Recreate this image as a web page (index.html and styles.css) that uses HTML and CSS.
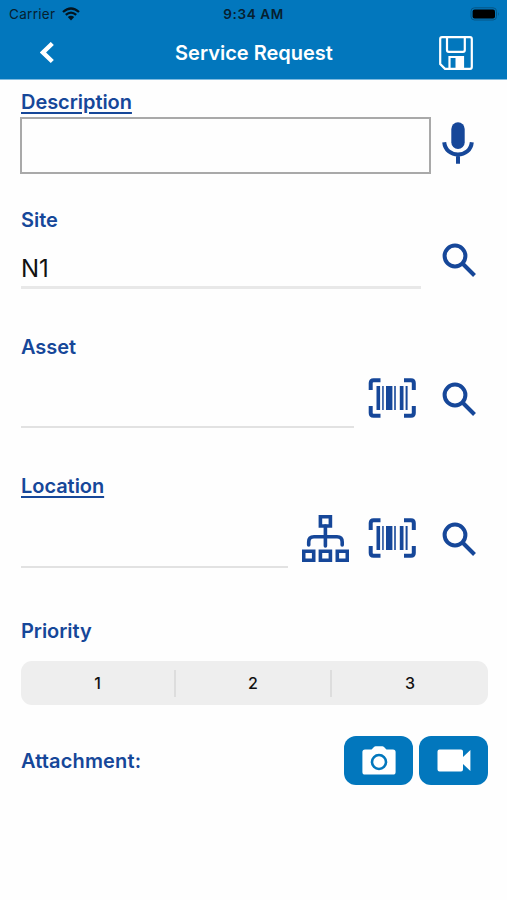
FILE: index.html
```html
<!DOCTYPE html>
<html lang="en">
<head>
    <meta charset="UTF-8" />
    <meta name="viewport" content="width=device-width, initial-scale=1" />
    <title>Service Request</title>
    <link rel="stylesheet" href="styles.css">
</head>
<body>
    <!-- Shared icons -->
    <svg class="icon-defs" width="0" height="0">
        <symbol id="icon-search" viewBox="0 0 34 34">
            <circle cx="13" cy="13" r="10.4" />
            <path d="M20.5 20.5L32.5 32.5" />
        </symbol>
        <symbol id="icon-barcode" viewBox="0 0 48 40">
            <path d="M2.7 12V5Q2.7 2.2 5.5 2.2H12.5M36 2.2H43Q45.8 2.2 45.8 5V12M2.7 28V35Q2.7 37.8 5.5 37.8H12.5M36 37.8H43Q45.8 37.8 45.8 35V28" />
            <path class="solid" d="M8.5 8h3.6v24H8.5zM14.2 8h1.5v24h-1.5zM18 8h6.4v24H18zM26.2 8h1.6v24h-1.6zM31.8 8h3.7v24h-3.7zM37.6 8h2v24h-2z" />
        </symbol>
    </svg>

    <header class="header">
        <div class="status-bar">
            <div class="carrier">
                <span>Carrier</span>
                <svg class="wifi" width="18" height="14" viewBox="0 0 18 14">
                    <path d="M1 5Q9 -2 17 5M3.8 7.9Q9 3.3 14.2 7.9" />
                    <path class="dot" d="M5.8 10Q9 7.4 12.2 10L9 13.4z" />
                </svg>
            </div>
            <div class="time">9:34 AM</div>
            <svg class="battery" width="30" height="14" viewBox="0 0 30 14">
                <rect class="shell" x="1" y=".8" width="25.5" height="12.2" rx="3.5" />
                <rect x="2.6" y="2.4" width="22.4" height="9" rx="2" />
                <path class="tip" d="M28 5q1.6 2 0 4z" />
            </svg>
        </div>
        <div class="nav">
            <button class="nav-button" aria-label="Back">
                <svg width="14" height="22" viewBox="0 0 14 22"><path class="back" d="M12.3 1.5L3 10.5L12.3 19.5" /></svg>
            </button>
            <h1>Service Request</h1>
            <button class="nav-button" aria-label="Save">
                <svg class="save" width="34" height="34" viewBox="0 0 34 34">
                    <path d="M3 1.2H31Q32.8 1.2 32.8 3V31Q32.8 32.8 31 32.8H6L1.2 28V3Q1.2 1.2 3 1.2z" />
                    <path d="M8 1.5V14Q8 15.8 9.8 15.8H24Q25.8 15.8 25.8 14V1.5M10.5 32V21H24V32" />
                    <path class="fill" d="M16.5 21H24V32H16.5z" />
                </svg>
            </button>
        </div>
    </header>

    <main class="form">
        <section class="field description">
            <div class="label required">Description</div>
            <div class="row">
                <div class="text-box"></div>
                <svg class="icon mic" width="32" height="42" viewBox="0 0 32 42">
                    <rect class="solid" x="9.3" y=".3" width="13.4" height="26.7" rx="6.7" />
                    <path d="M2.2 20.2C3 28 8.8 32.5 16 32.5S29 28 29.8 20.2M16 33V41.8" />
                </svg>
            </div>
        </section>

        <section class="field site">
            <div class="label">Site</div>
            <div class="row">
                <div class="line-input">N1</div>
                <svg class="icon search" width="34" height="34"><use href="#icon-search" /></svg>
            </div>
        </section>

        <section class="field asset">
            <div class="label">Asset</div>
            <div class="row">
                <div class="line-input"></div>
                <svg class="icon barcode" width="48" height="40"><use href="#icon-barcode" /></svg>
                <svg class="icon search" width="34" height="34"><use href="#icon-search" /></svg>
            </div>
        </section>

        <section class="field location">
            <div class="label required">Location</div>
            <div class="row">
                <div class="line-input"></div>
                <svg class="icon tree" width="47" height="47" viewBox="0 0 47 47">
                    <path d="M18.4 1.7h10v9.3h-10zM1.7 36.2h10v9.2h-10zM18.4 36.2h10v9.2h-10zM35.3 36.2h10v9.2h-10z" />
                    <path class="branch" d="M23.4 11V31M6.7 30V27Q6.7 21.8 12 21.8H35Q40.2 21.8 40.2 27V30" />
                </svg>
                <svg class="icon barcode" width="48" height="40"><use href="#icon-barcode" /></svg>
                <svg class="icon search" width="34" height="34"><use href="#icon-search" /></svg>
            </div>
        </section>

        <section class="field priority">
            <div class="label">Priority</div>
            <div class="segments">
                <button>1</button>
                <span class="divider"></span>
                <button>2</button>
                <span class="divider"></span>
                <button>3</button>
            </div>
        </section>

        <section class="attachment">
            <div class="label">Attachment:</div>
            <div class="buttons">
                <button class="attach-button" aria-label="Photo">
                    <svg width="34" height="29" viewBox="0 0 34 29">
                        <path d="M3 3.4H9.5L12 .9Q12.7 .2 13.6 .2H20.4Q21.3 .2 22 .9L24.5 3.4H31Q33.6 3.4 33.6 6V26Q33.6 28.6 31 28.6H3Q.4 28.6 .4 26V6Q.4 3.4 3 3.4z" />
                        <circle class="lens" cx="17" cy="16" r="7" />
                    </svg>
                </button>
                <button class="attach-button" aria-label="Video">
                    <svg width="34" height="23" viewBox="0 0 34 23">
                        <path d="M2.5 .4H24Q26 .4 26 2.4V8L33.4 1V22L26 15V20.6Q26 22.6 24 22.6H2.5Q.5 22.6 .5 20.6V2.4Q.5 .4 2.5 .4z" />
                    </svg>
                </button>
            </div>
        </section>
    </main>
</body>
</html>
```

FILE: styles.css
```css
* {
    box-sizing: border-box;
}
body {
    margin: 0;
    background-color: #fefefe;
    color: #111;
    font-family: Inter, "Liberation Sans", sans-serif;
}
button {
    border: none;
    padding: 0;
    background: none;
    font-family: inherit;
}
svg {
    display: block;
    flex-shrink: 0;
}
.icon-defs {
    height: 0;
}

/* Header */
.header {
    height: 80px;
    background-color: #0277bd;
    border-bottom: 1px solid #7fbbe0;
}
.status-bar {
    display: grid;
    grid-template-columns: 1fr auto 1fr;
    align-items: center;
    height: 27px;
    padding: 0 7px 0 9px;
    font-size: 13.5px;
    color: #06202f;
}
.carrier {
    display: flex;
    align-items: center;
    gap: 7px;
    letter-spacing: 0.3px;
}
.wifi {
    fill: none;
    stroke: #04141e;
    stroke-width: 2.3;
}
.wifi .dot {
    fill: #04141e;
    stroke: none;
}
.time {
    margin-right: 2px;
    font-weight: 600;
    letter-spacing: 0.6px;
}
.battery {
    justify-self: end;
}
.battery .shell {
    fill: none;
    stroke: #075685;
}
.battery .tip {
    fill: #075685;
}
.nav {
    display: grid;
    grid-template-columns: 66px 1fr 66px;
    align-items: center;
    height: 51px;
    padding: 0 18px 0 14px;
}
.nav h1 {
    margin: 0;
    padding-left: 5px;
    text-align: center;
    font-size: 20px;
    font-weight: 600;
    color: #fff;
}
.nav-button {
    display: flex;
    justify-content: center;
}
.back {
    fill: none;
    stroke: #fff;
    stroke-width: 4.4;
}
.save {
    fill: none;
    stroke: #fff;
    stroke-width: 2.2;
}
.save .fill {
    fill: #fff;
    stroke: none;
}

/* Form */
.form {
    padding: 9px 19px 0 21px;
}
.label {
    line-height: 26px;
    font-size: 20px;
    font-weight: 600;
    letter-spacing: -0.05px;
    color: #164799;
}
.required {
    text-decoration: underline;
    text-decoration-thickness: 2px;
    text-underline-offset: 3px;
}
.row {
    display: flex;
}
.icon {
    fill: none;
    stroke: #164799;
    stroke-width: 4;
}
.icon .solid, .solid {
    fill: #164799;
    stroke: none;
}
.line-input {
    flex: 1;
    border-bottom: 2px solid #e2e2e2;
    font-size: 24px;
}

.description {
    height: 118px;
}
.text-box {
    width: 411px;
    height: 57px;
    margin: 2px 11px 0 -1px;
    border: 2px solid #a9a9a9;
}
.mic {
    margin-top: 7px;
}

.site {
    height: 127px;
}
.site .line-input {
    height: 56px;
    padding-top: 21px;
    line-height: 29px;
    border-bottom-width: 3px;
    border-color: #e8e8e8;
}
.site .search {
    margin: 10px 12px 0 21px;
}

.asset {
    height: 139px;
}
.asset .line-input {
    height: 68px;
}
.asset .barcode {
    margin: 18px 26px 0 14px;
}
.asset .search {
    margin: 22px 12px 0 0;
}

.location {
    height: 145px;
}
.location .line-input {
    height: 69px;
}
.tree {
    margin: 16px 19px 0 14px;
    stroke-width: 3.6;
}
.tree .branch {
    stroke-linecap: round;
}
.location .barcode {
    margin: 19px 26px 0 0;
}
.location .search {
    margin: 23px 12px 0 0;
}

.segments {
    display: grid;
    grid-template-columns: 153px 2px 154px 2px 1fr;
    align-items: center;
    height: 44px;
    margin-top: 17px;
    border-radius: 11px;
    background-color: #eee;
}
.segments button {
    font-size: 16px;
    font-weight: 500;
    color: #111;
}
.divider {
    height: 27px;
    background-color: #ddd;
}

.attachment {
    display: flex;
    align-items: center;
    justify-content: space-between;
    height: 49px;
    margin-top: 31px;
}
.attachment .label {
    letter-spacing: 0.15px;
}
.buttons {
    display: flex;
    gap: 6px;
}
.attach-button {
    display: flex;
    align-items: center;
    justify-content: center;
    width: 69px;
    height: 49px;
    border-radius: 12px;
    background-color: #0277bd;
    fill: #fff;
}
.lens {
    stroke: #0277bd;
    stroke-width: 2.6;
}
```
